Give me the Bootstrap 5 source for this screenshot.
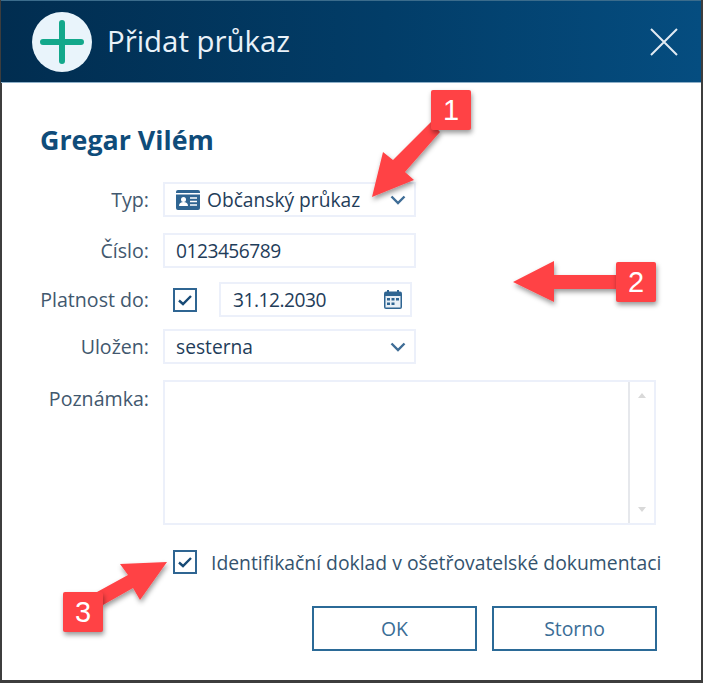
<!DOCTYPE html>
<html lang="cs">
<head>
  <meta charset="UTF-8">
  <meta name="viewport" content="width=device-width, initial-scale=1.0">
  <title>Přidat průkaz</title>
  <link href="https://cdn.jsdelivr.net/npm/bootstrap@5.3.3/dist/css/bootstrap.min.css" rel="stylesheet">
  <style>
    html, body { height: 100%; }
    body {
      background: #fff;
      font-family: "Open Sans", "Noto Sans", sans-serif;
      color: #1f3d5a;
      overflow: hidden;
    }
    .dlg-window {
      position: relative;
      width: 703px;
      height: 683px;
      border-left: 2px solid #3d3d3d;
      border-right: 2px solid #3d3d3d;
      border-bottom: 3px solid #3d3d3d;
    }
    .dlg-head {
      height: 83px;
      margin-left: -1px;
      padding-left: 31px;
      padding-right: 22px;
      background: linear-gradient(90deg, #012d50 0%, #023d68 55%, #054d80 100%);
      border-top: 1px solid #3b6c8c;
      border-bottom: 1px solid #8fb0c8;
    }
    .dlg-title { font-size: 29.4px; color: #e9f2f9; margin-left: 15px; line-height: 1; }
    .dlg-body { padding: 41px 0 0 39px; }
    .patient-name { font-size: 26.8px; font-weight: 700; color: #0f4c7a; line-height: 32px; margin: 0 0 26px -1px; }
    .form-line { display: flex; align-items: center; }
    .form-line + .form-line { margin-top: 16px; }
    .form-line.tight-a { margin-top: 14px; }
    .form-line.tight-b { margin-top: 12px; }
    .form-line.top { align-items: flex-start; }
    .line-label { width: 108px; margin-right: 14px; padding-top: 1px; font-size: 19.6px; color: #42586e; white-space: nowrap; display: flex; justify-content: flex-end; }
    .top .line-label { padding-top: 4px; }
    .field-box {
      width: 253px;
      height: 35px;
      padding: 0 8px 0 11px;
      border: 2px solid #ecf0fa;
      border-radius: 0;
      background: #fff;
      font-size: 19.2px;
      line-height: 31px;
      color: #1f3d5a;
      display: flex;
      align-items: center;
    }
    .field-box.date-box { width: 193px; padding-left: 12px; padding-right: 8px; }
    .digits-text { letter-spacing: -.5px; }
    .card-icon { margin-right: 7px; }
    .note-box {
      width: 493px;
      height: 145px;
      border: 2px solid #ecf0fa;
      padding: 0;
    }
    .note-scroll { width: 26px; height: 100%; border-left: 2px solid #e6e8ec; }
    .tick-box.form-check-input {
      width: 24px;
      height: 24px;
      margin: 0;
      flex: none;
      border: 2px solid #2f6592;
      border-radius: 0;
      background-color: #fff;
      background-size: 16px;
      background-image: url("data:image/svg+xml,%3csvg xmlns='http://www.w3.org/2000/svg' viewBox='0 0 16 16'%3e%3cpath fill='none' stroke='%23174a76' stroke-width='2.4' d='M2 8.5l4 3.5 8-8'/%3e%3c/svg%3e");
    }
    .tick-wrap { margin-left: 10px; margin-right: 22px; }
    .doc-line { margin-top: 25px; margin-left: 132px; height: 24px; }
    .doc-text { font-size: 19.35px; color: #34536e; margin-left: 14px; white-space: nowrap; }
    .btn-line { margin-top: 32px; margin-left: 271px; gap: 15px; }
    .btn-line .btn {
      width: 165px;
      height: 45px;
      border: 2px solid #2b6a97;
      border-radius: 0;
      background: #fff;
      color: #3a6d96;
      font-size: 19.4px;
      padding: 0;
    }
    .note-overlay { position: absolute; left: -2px; top: 0; pointer-events: none; }
    .step-tag {
      position: absolute;
      width: 40px;
      height: 40px;
      background: #ff4245;
      color: #fff;
      border-radius: 2px;
      font-family: "Liberation Sans", sans-serif;
      font-size: 29px;
      line-height: 40px;
      text-align: center;
      box-shadow: 1px 3px 5px rgba(0, 0, 0, .4);
    }
    .step-1 { left: 429px; top: 90px; }
    .step-2 { left: 614px; top: 262px; }
    .step-3 { left: 61px; top: 592px; }
  </style>
</head>
<body>
  <div class="dlg-window">
    <div class="dlg-head d-flex align-items-center">
      <svg width="60" height="60" viewBox="0 0 60 60" class="flex-shrink-0">
        <circle cx="30" cy="30" r="30" fill="#e9f4fb"/>
        <path d="M30 11v38M11 30h38" stroke="#13a88b" stroke-width="6" stroke-linecap="round"/>
      </svg>
      <div class="dlg-title">Přidat průkaz</div>
      <svg width="30" height="30" viewBox="0 0 30 30" class="ms-auto">
        <path d="M2 2l26 26M28 2L2 28" stroke="#e2ebf3" stroke-width="2"/>
      </svg>
    </div>

    <div class="dlg-body">
      <h1 class="patient-name">Gregar Vilém</h1>

      <div class="form-line">
        <div class="line-label">Typ:</div>
        <div class="field-box">
          <svg width="24" height="20" viewBox="0 0 24 20" class="card-icon flex-shrink-0">
            <rect width="24" height="20" rx="2" fill="#2f6592"/>
            <rect y="3" width="24" height="1.5" fill="#fff"/>
            <circle cx="7.5" cy="9.5" r="2.5" fill="#fff"/>
            <path d="M3 16c0-3 2-4 4.500-4s4.500 1 4.500 4z" fill="#fff"/>
            <path d="M14 8h7M14 11.500h7M14 15h7" stroke="#fff" stroke-width="1.500"/>
          </svg>
          <span class="flex-grow-1">Občanský průkaz</span>
          <svg width="16" height="10" viewBox="0 0 16 10" class="flex-shrink-0">
            <path d="M1.500 1.500L8 8l6.500-6.500" fill="none" stroke="#3f6d96" stroke-width="2.400"/>
          </svg>
        </div>
      </div>

      <div class="form-line">
        <div class="line-label">Číslo:</div>
        <div class="field-box"><span class="digits-text">0123456789</span></div>
      </div>

      <div class="form-line tight-a">
        <div class="line-label">Platnost do:</div>
        <div class="tick-wrap d-flex"><input class="form-check-input tick-box" type="checkbox" checked aria-label="Platnost do"></div>
        <div class="field-box date-box">
          <span class="flex-grow-1 digits-text">31.12.2030</span>
          <svg width="18" height="19" viewBox="0 0 18 19" class="flex-shrink-0">
            <path d="M4 0v3M14 0v3" stroke="#2f6592" stroke-width="2"/>
            <rect y="1.500" width="18" height="17.500" rx="2" fill="#2f6592"/>
            <rect x="1.500" y="6" width="15" height="11.500" fill="#e9f0f6"/>
            <path d="M3 8h3v2.500H3zM7.500 8h3v2.500h-3zM12 8h3v2.500h-3zM3 12.500h3V15H3zM7.500 12.500h3V15h-3z" fill="#2f6592"/>
          </svg>
        </div>
      </div>

      <div class="form-line tight-b">
        <div class="line-label">Uložen:</div>
        <div class="field-box">
          <span class="flex-grow-1">sesterna</span>
          <svg width="16" height="10" viewBox="0 0 16 10" class="flex-shrink-0">
            <path d="M1.500 1.500L8 8l6.500-6.500" fill="none" stroke="#3f6d96" stroke-width="2.400"/>
          </svg>
        </div>
      </div>

      <div class="form-line top">
        <div class="line-label">Poznámka:</div>
        <div class="note-box d-flex justify-content-end">
          <div class="note-scroll">
            <svg width="24" height="141" viewBox="0 0 24 141" class="d-block">
              <path d="M8 16l4-5 4 5zM8 125l4 5 4-5z" fill="#d9d9d9"/>
            </svg>
          </div>
        </div>
      </div>

      <div class="d-flex align-items-center doc-line">
        <input class="form-check-input tick-box" type="checkbox" checked aria-label="Identifikační doklad">
        <span class="doc-text">Identifikační doklad v ošetřovatelské dokumentaci</span>
      </div>

      <div class="d-flex btn-line">
        <button class="btn" type="button">OK</button>
        <button class="btn" type="button">Storno</button>
      </div>
    </div>

    <!-- callouts over the dialog -->
    <svg class="note-overlay" width="703" height="683" viewBox="0 0 703 683">
      <defs>
        <filter id="arrowShadow" x="-20%" y="-20%" width="140%" height="140%">
          <feDropShadow dx="1" dy="3" stdDeviation="2.500" flood-color="#000" flood-opacity=".4"/>
        </filter>
      </defs>
      <g fill="#ff4245" filter="url(#arrowShadow)">
        <path d="M372 197L383 152 393 160 431 122 440 132 405 172 414 180z"/>
        <path d="M513 282L554 261V275H620V289H554V302z"/>
        <path d="M167 562L120 564 128 575 97 592 103 605 133 588 140 600z"/>
      </g>
    </svg>
    <div class="step-tag step-1">1</div>
    <div class="step-tag step-2">2</div>
    <div class="step-tag step-3">3</div>
  </div>
  <script src="https://cdn.jsdelivr.net/npm/bootstrap@5.3.3/dist/js/bootstrap.bundle.min.js"></script>
</body>
</html>
